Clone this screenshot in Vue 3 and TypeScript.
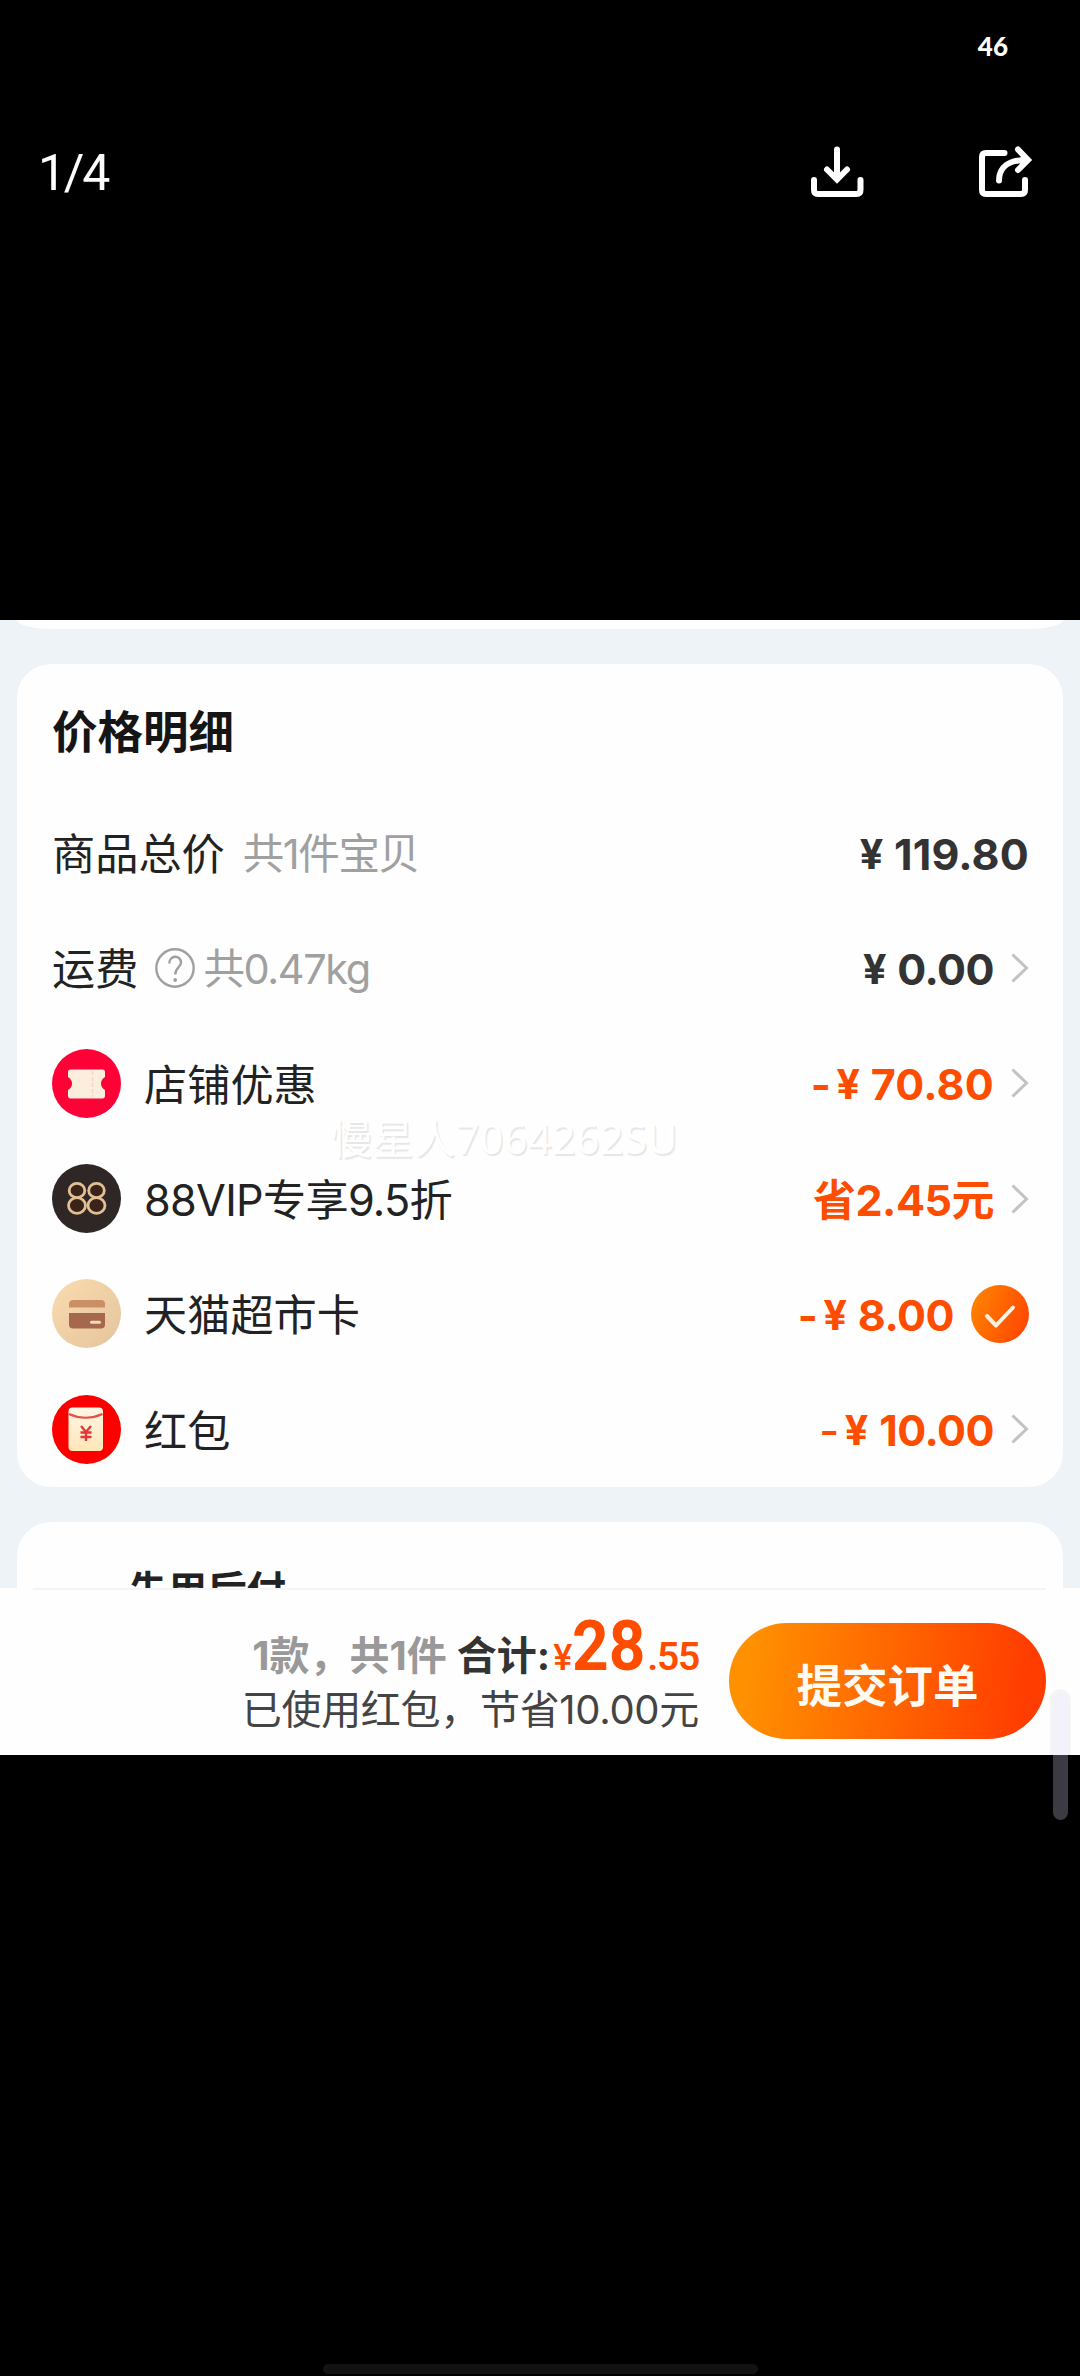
<script setup lang="ts">
type IconName = 'coupon' | 'vip' | 'card' | 'packet'

interface PriceRow {
  label: string
  icon?: IconName
  help?: boolean
  note?: string
  minus?: 'bold' | 'thin'
  yen?: boolean
  amount: string
  wide?: boolean
  accent?: boolean
  end: 'none' | 'arrow' | 'check'
}

const rows: PriceRow[] = [
  { label: '商品总价', note: '共1件宝贝', yen: true, amount: '119.80', wide: true, end: 'none' },
  { label: '运费', help: true, note: '共0.47kg', yen: true, amount: '0.00', end: 'arrow' },
  { label: '店铺优惠', icon: 'coupon', minus: 'bold', yen: true, amount: '70.80', wide: true, accent: true, end: 'arrow' },
  { label: '88VIP专享9.5折', icon: 'vip', amount: '省2.45元', accent: true, end: 'arrow' },
  { label: '天猫超市卡', icon: 'card', minus: 'bold', yen: true, amount: '8.00', accent: true, end: 'check' },
  { label: '红包', icon: 'packet', minus: 'thin', yen: true, amount: '10.00', accent: true, end: 'arrow' },
]
</script>

<template>
  <div class="viewer">
    <header class="status"><span class="battery">46</span></header>
    <nav class="toolbar">
      <span class="counter">1/4</span>
      <div class="actions">
        <svg class="action" width="60" height="60" viewBox="0 0 60 60">
          <path d="M7 37V47Q7 51 11 51H49.500Q53.500 51 53.500 47V37M30 6.500V36M20 26.500L30 36.500L40 26.500" />
        </svg>
        <svg class="action" width="60" height="60" viewBox="0 0 60 60">
          <path d="M29.500 10H11Q7 10 7 14V47Q7 51 11 51H46Q50 51 50 47V37M24 37.500C24 24 34 17 51 17M43 6.500L53 17L43 27" />
        </svg>
      </div>
    </nav>

    <main class="photo">
      <div class="card-prev"></div>
      <section class="card">
        <h1 class="title">价格明细</h1>
        <div v-for="row in rows" :key="row.label" class="row">
          <svg v-if="row.icon" class="badge" width="69" height="69" viewBox="0 0 69 69">
            <defs>
              <linearGradient id="sand" x1="0" y1="0" x2="1" y2="1">
                <stop offset="0" stop-color="#fbdcb0" />
                <stop offset="1" stop-color="#e3c49c" />
              </linearGradient>
              <linearGradient id="cream" x1="0" y1="0" x2="0" y2="1">
                <stop offset="0" stop-color="#fff6e6" />
                <stop offset="1" stop-color="#ffe6b8" />
              </linearGradient>
            </defs>
            <template v-if="row.icon === 'coupon'">
              <circle cx="34.500" cy="34.500" r="34.500" fill="#fe0136" />
              <path d="M18.500 20.500H50.500Q53 20.500 53 23V28Q49 30.500 49 34.500T53 41V46.500Q53 49.500 50.500 49.500H18.500Q16 49.500 16 46.500V41Q20 38.500 20 34.500T16 28V23Q16 20.500 18.500 20.500Z" fill="#fbeedd" />
              <path d="M40.500 22V48" stroke="#fbd3cb" stroke-width="1.500" stroke-dasharray="4 2" />
            </template>
            <template v-else-if="row.icon === 'vip'">
              <circle cx="34.500" cy="34.500" r="34.500" fill="#2e2726" />
              <g fill="#3a2419" stroke="#e3bf96" stroke-width="2.800">
                <ellipse cx="25" cy="41.500" rx="8.500" ry="7.800" />
                <ellipse cx="44.500" cy="41.500" rx="8.500" ry="7.800" />
                <ellipse cx="25" cy="26.500" rx="7.800" ry="7.200" />
                <ellipse cx="44.500" cy="26.500" rx="7.800" ry="7.200" />
              </g>
            </template>
            <template v-else-if="row.icon === 'card'">
              <circle cx="34.500" cy="34.500" r="34.500" fill="url(#sand)" />
              <path d="M17 28.500V25Q17 21 21.500 21H49Q53 21 53 25V28.500Z" fill="#c98f66" />
              <path d="M17 34H53V45.500Q53 49.500 49 49.500H21Q17 49.500 17 45.500Z" fill="#a5674d" />
              <path d="M39.500 43.300H47.500" stroke="#f6d9b8" stroke-width="3" stroke-linecap="round" />
            </template>
            <template v-else>
              <circle cx="34.500" cy="34.500" r="34.500" fill="#fc0000" />
              <rect x="16.500" y="12.500" width="34.500" height="43.500" rx="4" fill="url(#cream)" />
              <path d="M17 19Q33.500 26.500 50.500 19" fill="none" stroke="#e2504a" stroke-width="2.200" />
              <path d="M29 31L34 37L39 31M34 37V46M28.500 37.500H39.500M28.500 42H39.500" fill="none" stroke="#e0383c" stroke-width="2.400" />
            </template>
          </svg>
          <span class="label" :class="{ tight: row.icon === 'vip' }">{{ row.label }}</span>
          <svg v-if="row.help" class="help" width="40" height="40" viewBox="0 0 40 40">
            <circle cx="20" cy="20" r="18.700" />
            <path d="M14.300 15.500C14.300 6.500 26 7 26 14.500C26 19.500 20.200 19.500 20.200 26.500" />
            <circle class="dot" cx="20.200" cy="32" r="1.900" />
          </svg>
          <span v-if="row.note" class="note">{{ row.note }}</span>
          <div class="value" :class="{ accent: row.accent }">
            <span v-if="row.minus" class="minus" :class="row.minus">-</span>
            <span v-if="row.yen" class="yen">¥</span>
            <span class="amount" :class="{ wide: row.wide }">{{ row.amount }}</span>
            <svg v-if="row.end === 'arrow'" class="arrow" width="18" height="30" viewBox="0 0 18 30">
              <path d="M1.500 1.500L15.500 15L1.500 28.500" />
            </svg>
            <svg v-if="row.end === 'check'" class="check" width="58" height="58" viewBox="0 0 58 58">
              <defs>
                <linearGradient id="flame" x1="0" y1="0.300" x2="1" y2="0.700">
                  <stop offset="0" stop-color="#ff8200" />
                  <stop offset="1" stop-color="#ff4600" />
                </linearGradient>
              </defs>
              <circle cx="29" cy="29" r="29" fill="url(#flame)" />
              <path d="M16 31L25 40.500L42 22.500" fill="none" stroke="#fff0e0" stroke-width="4" stroke-linecap="round" stroke-linejoin="round" />
            </svg>
          </div>
        </div>
      </section>
      <section class="card-next"><span>先用后付</span></section>
      <footer class="checkout">
        <div class="summary">
          <div class="total">
            <span class="count">1款，共1件</span>
            <span class="sum">合计:</span>
            <span class="sum-yen">¥</span>
            <span class="sum-int">28</span>
            <span class="sum-dec">.55</span>
          </div>
          <div class="saved">已使用红包，节省10.00元</div>
        </div>
        <button class="submit">提交订单</button>
      </footer>
      <div class="watermark">慢星人7064262SU</div>
    </main>
    <div class="thumb"></div>
    <div class="home"></div>
  </div>
</template>

<style>
body {
  background: #000;
}
</style>

<style scoped>
.viewer {
  position: relative;
  width: 1080px;
  height: 2376px;
  overflow: hidden;
  background: #000;
  font-family: Inter, "Noto Sans CJK SC", sans-serif;
}
.status {
  display: flex;
  justify-content: flex-end;
  align-items: center;
  height: 92px;
  padding-right: 72px;
  box-sizing: border-box;
}
.battery {
  color: #fff;
  font: 900 26px/1 Lato, sans-serif;
}
.toolbar {
  display: flex;
  justify-content: space-between;
  align-items: center;
  height: 160px;
  margin-top: 1px;
  padding: 0 45px 0 38px;
}
.counter {
  color: #fff;
  font: 400 50px/1 Roboto, sans-serif;
  letter-spacing: -2.3px;
}
.actions {
  display: flex;
  gap: 108px;
}
.action {
  fill: none;
  stroke: #fff;
  stroke-width: 6;
  stroke-linecap: round;
}
.photo {
  position: relative;
  height: 1135px;
  margin-top: 367px;
  overflow: hidden;
  background: #eef3f7;
}
.card-prev {
  height: 9px;
  margin: 0 17px 35px;
  border-radius: 0 0 34px 34px / 0 0 9px 9px;
  background: #fefefe;
}
.card {
  height: 823px;
  margin: 0 17px;
  padding: 0 34px 0 35px;
  box-sizing: border-box;
  border-radius: 34px;
  background: #fefefe;
}
.title {
  height: 131px;
  margin: 0;
  color: #151515;
  font-size: 45.5px;
  font-weight: 700;
  line-height: 137px;
}
.row {
  display: flex;
  align-items: center;
  height: 115.3px;
}
.badge {
  flex: none;
  margin-right: 23px;
}
.label {
  padding-top: 3px;
  color: #222;
  font-size: 43.2px;
  line-height: 60px;
}
.label.tight {
  letter-spacing: -0.7px;
}
.help {
  margin-left: 17px;
  fill: none;
  stroke: #a0a0a0;
  stroke-width: 2.4;
}
.help .dot {
  fill: #a0a0a0;
  stroke: none;
}
.note {
  margin-left: 18px;
  padding-top: 3px;
  color: #a0a0a0;
  font-size: 41.5px;
  font-weight: 400;
  line-height: 60px;
  letter-spacing: -1.4px;
}
.help + .note {
  margin-left: 8px;
}
.value {
  display: flex;
  align-items: center;
  margin-left: auto;
  color: #333;
  font-size: 43px;
  font-weight: 700;
  line-height: 60px;
}
.value span {
  padding-top: 2px;
}
.accent {
  color: #ff4d00;
}
.minus {
  margin-right: 5px;
}
.minus.thin {
  font-weight: 500;
}
.yen {
  width: 25px;
  margin-right: 10px;
  font-family: Roboto, sans-serif;
  text-align: center;
}
.amount {
  letter-spacing: -0.5px;
}
.amount.wide {
  letter-spacing: 0.2px;
}
.arrow {
  margin-left: 17px;
  fill: none;
  stroke: #c3c3c3;
  stroke-width: 3;
}
.check {
  margin-left: 17px;
}
.card-next {
  height: 66px;
  margin: 35px 17px 0;
  padding-left: 111px;
  overflow: hidden;
  box-sizing: border-box;
  border-radius: 34px 34px 0 0;
  background: #fefefe;
  color: #222;
  font-size: 39.5px;
  font-weight: 700;
  line-height: 60px;
}
.card-next span {
  display: block;
  margin-top: 39px;
}
.checkout {
  display: flex;
  height: 167px;
  padding-right: 34px;
  justify-content: flex-end;
  box-sizing: border-box;
  background: linear-gradient(#f3f4f5, #f3f4f5) 33px 0 / 1013px 2px no-repeat #fefefe;
}
.summary {
  display: flex;
  flex-direction: column;
  align-items: flex-end;
  margin-right: 30px;
  white-space: nowrap;
}
.total {
  display: flex;
  align-items: baseline;
  height: 60px;
  margin-top: 28px;
  font-size: 40px;
  font-weight: 700;
  line-height: 60px;
}
.count {
  color: #999;
}
.sum {
  margin-left: 10px;
  color: #333;
}
.sum-yen {
  margin-left: 3px;
  color: #ff4d00;
  font: 500 36px/60px Roboto, sans-serif;
}
.sum-int {
  width: 75px;
  color: #ff4d00;
  font: 700 71px/60px Roboto, sans-serif;
  transform: scaleX(0.9);
  transform-origin: left;
}
.sum-dec {
  color: #ff4d00;
  font: 600 39px/60px Roboto, sans-serif;
  letter-spacing: -1.3px;
}
.saved {
  margin-top: 4px;
  color: #444;
  font-size: 40px;
  line-height: 60px;
  letter-spacing: -0.3px;
}
.submit {
  width: 317px;
  height: 116px;
  margin-top: 35px;
  padding: 0;
  border: 0;
  border-radius: 58px;
  background: linear-gradient(97deg, #ff9000 8%, #ff3d00 92%);
  color: #fffaf2;
  font: 700 45.5px/120px "Noto Sans CJK SC", sans-serif;
}
.watermark {
  position: absolute;
  top: 488px;
  left: 331px;
  color: #fff;
  font: 400 41px/60px "Noto Sans", "Noto Sans CJK SC", sans-serif;
  letter-spacing: 0.6px;
  text-shadow: 1.5px 1.5px 1px #e6e6e6;
  white-space: nowrap;
}
.thumb {
  position: absolute;
  top: 1692px;
  left: 1053px;
  width: 15px;
  height: 128px;
  border-radius: 8px;
  background: rgba(214, 211, 239, 0.28);
  box-shadow: 0 0 0 3px rgba(0, 0, 0, 0.04);
}
.home {
  position: absolute;
  top: 2364px;
  left: 323px;
  width: 435px;
  height: 10px;
  border-radius: 5px;
  background: #121212;
}
</style>
